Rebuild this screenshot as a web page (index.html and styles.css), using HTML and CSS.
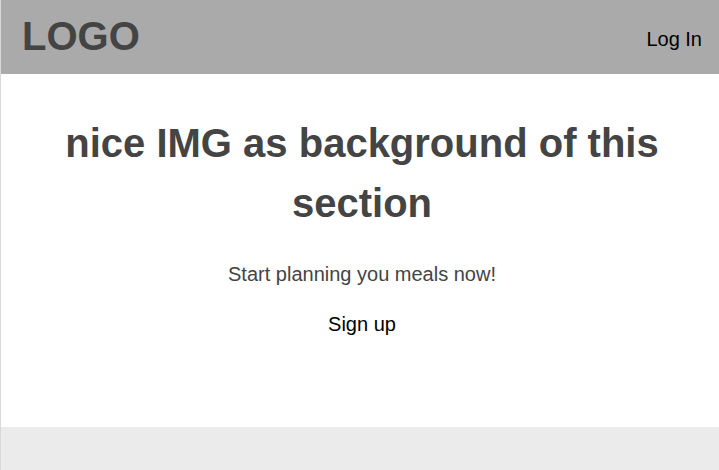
FILE: index.html
```html
<!DOCTYPE html>
<html>
<head>
<meta charset="utf-8">
<link rel="stylesheet" href="styles.css">
</head>
<body>
<div class="page">
  <header class="header">
    <div class="logo">LOGO</div>
    <a class="login">Log In</a>
  </header>
  <section class="hero">
    <h1 class="title">nice IMG as background of this section</h1>
    <p class="subtitle">Start planning you meals now!</p>
    <a class="signup">Sign up</a>
  </section>
  <footer class="footer"></footer>
</div>
</body>
</html>
```
FILE: styles.css
```css
html, body {
  margin: 0;
  padding: 0;
}
body {
  font-family: "Liberation Sans", Arial, sans-serif;
  color: #444;
  background: #fff;
}
.page {
  display: flex;
  flex-direction: column;
  height: 470px;
  border-left: 1px solid #d9d9d9;
}
.header {
  height: 74px;
  background: #aaaaaa;
  display: flex;
  align-items: center;
  justify-content: space-between;
  padding: 0 17px 0 21px;
  flex-shrink: 0;
}
.logo {
  font-size: 40px;
  font-weight: bold;
  color: #444;
  line-height: 1;
  margin-top: -2px;
}
.login {
  font-size: 20px;
  color: #000;
  line-height: 1;
  margin-top: 3px;
}
.hero {
  height: 353px;
  display: flex;
  flex-direction: column;
  align-items: center;
  text-align: center;
  padding: 39px 0 0 4px;
  box-sizing: border-box;
  flex-shrink: 0;
}
.title {
  margin: 0;
  font-size: 40px;
  line-height: 60px;
  font-weight: bold;
  color: #444;
  max-width: 620px;
}
.subtitle {
  margin: 30px 0 0;
  font-size: 20px;
  line-height: 23px;
  color: #444;
}
.signup {
  margin-top: 27px;
  font-size: 20px;
  line-height: 23px;
  color: #000;
}
.footer {
  flex: 1;
  background: #ebebeb;
}
```
